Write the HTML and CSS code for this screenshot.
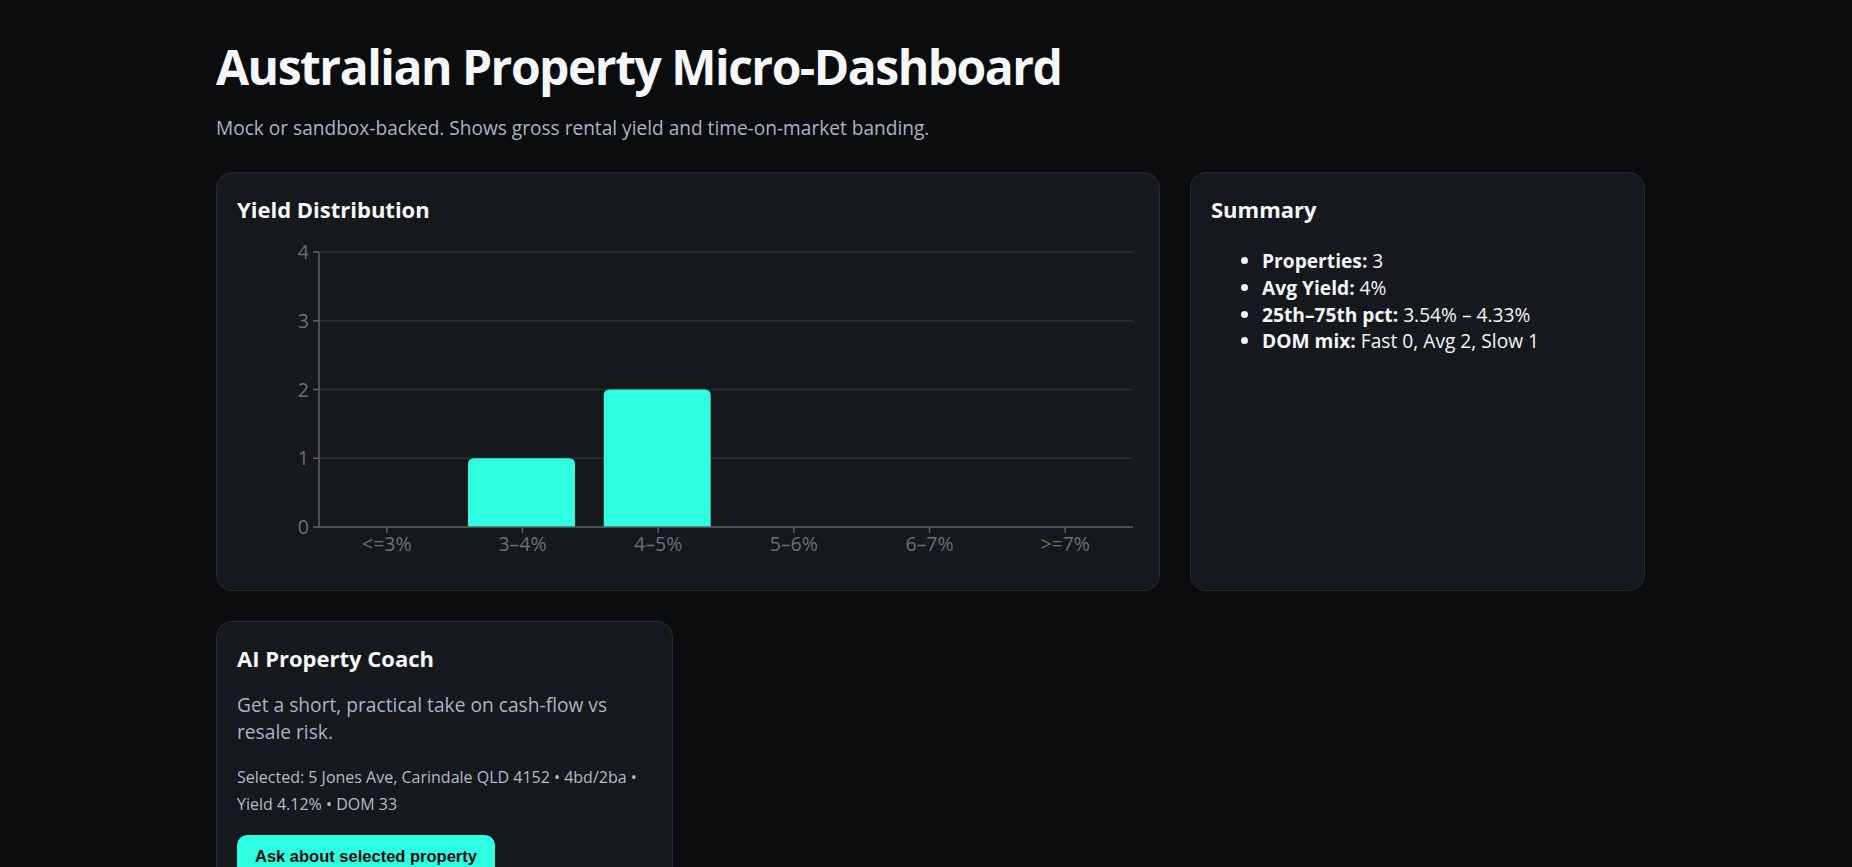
FILE: index.html
```html
<!DOCTYPE html>
<html lang="en">
<head>
<meta charset="utf-8">
<title>Australian Property Micro-Dashboard</title>
<link rel="stylesheet" href="styles.css">
</head>
<body>
<main class="page">
  <h1 class="title">Australian Property Micro-Dashboard</h1>
  <p class="subtitle">Mock or sandbox-backed. Shows gross rental yield and time-on-market banding.</p>

  <div class="grid">
    <section class="card card-wide">
      <h2 class="card-title">Yield Distribution</h2>
      <svg class="chart" width="903" height="338" viewBox="0 0 903 338">
        <g transform="translate(0,8)">
          <g class="grid-lines">
            <line x1="82" y1="12" x2="896" y2="12"/>
            <line x1="82" y1="80.75" x2="896" y2="80.75"/>
            <line x1="82" y1="149.5" x2="896" y2="149.5"/>
            <line x1="82" y1="218.25" x2="896" y2="218.25"/>
          </g>
          <path class="bar" d="M231 287 V224.25 Q231 218.25 237 218.25 H332 Q338 218.25 338 224.25 V287 Z"/>
          <path class="bar" d="M366.7 287 V155.5 Q366.7 149.5 372.7 149.5 H467.7 Q473.7 149.5 473.7 155.5 V287 Z"/>
          <g class="axis">
            <line x1="82" y1="12" x2="82" y2="287"/>
            <line x1="76" y1="287" x2="896" y2="287"/>
            <line x1="76" y1="12" x2="82" y2="12"/>
            <line x1="76" y1="80.75" x2="82" y2="80.75"/>
            <line x1="76" y1="149.5" x2="82" y2="149.5"/>
            <line x1="76" y1="218.25" x2="82" y2="218.25"/>
            <line x1="149.8" y1="287" x2="149.8" y2="293"/>
            <line x1="285.5" y1="287" x2="285.5" y2="293"/>
            <line x1="421.2" y1="287" x2="421.2" y2="293"/>
            <line x1="556.8" y1="287" x2="556.8" y2="293"/>
            <line x1="692.5" y1="287" x2="692.5" y2="293"/>
            <line x1="828.2" y1="287" x2="828.2" y2="293"/>
          </g>
          <g class="tick-y">
            <text x="72" y="294">0</text>
            <text x="72" y="225.25">1</text>
            <text x="72" y="156.5">2</text>
            <text x="72" y="87.75">3</text>
            <text x="72" y="19">4</text>
          </g>
          <g class="tick-x">
            <text x="149.8" y="311">&lt;=3%</text>
            <text x="285.5" y="311">3–4%</text>
            <text x="421.2" y="311">4–5%</text>
            <text x="556.8" y="311">5–6%</text>
            <text x="692.5" y="311">6–7%</text>
            <text x="828.2" y="311">&gt;=7%</text>
          </g>
        </g>
      </svg>
    </section>

    <section class="card">
      <h2 class="card-title">Summary</h2>
      <ul class="summary-list">
        <li><strong>Properties:</strong> 3</li>
        <li><strong>Avg Yield:</strong> 4%</li>
        <li><strong>25th–75th pct:</strong> 3.54% – 4.33%</li>
        <li><strong>DOM mix:</strong> Fast 0, Avg 2, Slow 1</li>
      </ul>
    </section>

    <section class="card coach">
      <h2 class="card-title">AI Property Coach</h2>
      <p class="coach-lead">Get a short, practical take on cash-flow vs resale risk.</p>
      <p class="coach-selected">Selected: 5 Jones Ave, Carindale QLD 4152 • 4bd/2ba • Yield 4.12% • DOM 33</p>
      <button class="btn" type="button">Ask about selected property</button>
    </section>
  </div>
</main>
</body>
</html>
```

FILE: styles.css
```css
html, body {
  margin: 0;
  padding: 0;
  background: #0b0c0e;
  color: #f3f5f8;
  font-family: "Open Sans", "Noto Sans", sans-serif;
}

.page {
  padding: 38px 0 40px 216px;
  width: 1428px;
}

.title {
  margin: 0;
  font-size: 48px;
  line-height: 57.6px;
  font-weight: 700;
  letter-spacing: -1.5px;
  color: #f5f7fb;
}

.subtitle {
  margin: 19px 0 0;
  font-size: 19.1px;
  line-height: 27px;
  color: #aab4c3;
}

.grid {
  margin-top: 30px;
  display: grid;
  grid-template-columns: 457px 457px 455px;
  gap: 30px;
}

.card {
  background: #15181d;
  border: 1px solid #262a31;
  border-radius: 16px;
  padding: 22px 20px 20px;
}

.card-wide {
  grid-column: span 2;
}

.card-title {
  margin: 0;
  font-size: 22px;
  line-height: 28.6px;
  font-weight: 700;
  color: #f5f7fb;
}

.chart {
  display: block;
  margin-top: 9px;
  overflow: visible;
}

.grid-lines line {
  stroke: #2c3037;
  stroke-width: 1.5;
}

.axis line {
  stroke: #5d6168;
  stroke-width: 1.5;
}

.bar {
  fill: #2effe0;
}

.tick-y text,
.tick-x text {
  font-family: "Open Sans", sans-serif;
  font-size: 19.5px;
  fill: #6b7078;
}

.tick-y text {
  text-anchor: end;
}

.tick-x text {
  text-anchor: middle;
}

.summary-list {
  margin: 25px 0 0;
  padding-left: 51px;
  font-size: 19.2px;
  line-height: 26.7px;
}

.summary-list strong {
  font-weight: 700;
}

.coach {
  grid-column: 1;
}

.coach-lead {
  margin: 18px 0 0;
  font-size: 19.2px;
  line-height: 27px;
  color: #aab4c3;
}

.coach-selected {
  margin: 19px 0 0;
  font-size: 16px;
  line-height: 27px;
  color: #b4bcc8;
}

.btn {
  margin-top: 17px;
  background: #2effe0;
  color: #0b0d10;
  border: 0;
  border-radius: 10px;
  padding: 12px 18px;
  font-family: "Liberation Sans", Arial, sans-serif;
  font-weight: 700;
  font-size: 16.5px;
  cursor: pointer;
}
```
